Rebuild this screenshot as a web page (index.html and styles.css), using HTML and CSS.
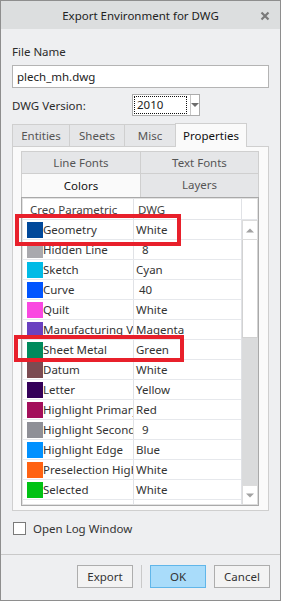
FILE: index.html
```html
<!DOCTYPE html>
<html lang="en">
<head>
  <meta charset="UTF-8" />
  <title>Export Environment for DWG</title>
  <link rel="stylesheet" href="styles.css">
</head>
<body>

  <div class="window">
    <div class="titlebar">
      <span class="title">Export Environment for DWG</span>
      <svg class="close" width="10" height="10" viewBox="0 0 10 10">
        <path d="M1.5 1.5 L8.5 8.5 M8.5 1.5 L1.5 8.5" stroke="#7a7a7a" stroke-width="2.2" />
      </svg>
    </div>

    <div class="content">
      <div class="label">File Name</div>
      <div class="textbox">plech_mh.dwg</div>

      <div class="version-row">
        <span class="version-label">DWG Version:</span>
        <div class="select">
          <div class="select-value"><span class="focus">2010</span></div>
          <div class="select-arrow">
            <svg width="8" height="5" viewBox="0 0 8 5"><path d="M0 0 H8 L4 4 Z" fill="#6d6d6d" /></svg>
          </div>
        </div>
      </div>

      <div class="tabs">
        <div class="tab tab-entities">Entities</div>
        <div class="tab tab-sheets">Sheets</div>
        <div class="tab tab-misc">Misc</div>
        <div class="tab tab-props active">Properties</div>
      </div>

      <div class="panel">
        <div class="subtabs">
          <div class="subtab">Line Fonts</div>
          <div class="subtab">Text Fonts</div>
          <div class="subtab active">Colors</div>
          <div class="subtab">Layers</div>
        </div>

        <div class="grid">
          <div class="grid-head">
            <div class="head-cell col-name">Creo Parametric</div>
            <div class="head-cell col-dwg">DWG</div>
            <div class="head-cell col-scroll"></div>
          </div>
          <div class="grid-body">
            <div class="rows" id="rows"></div>
            <div class="scrollbar">
              <div class="scroll-btn">
                <svg width="8" height="5" viewBox="0 0 8 5"><path d="M0 4.5 H8 L4 0.5 Z" fill="#a2a2a2" /></svg>
              </div>
              <div class="scroll-thumb"></div>
              <div class="scroll-track"></div>
              <div class="scroll-btn">
                <svg width="8" height="5" viewBox="0 0 8 5"><path d="M0 0.5 H8 L4 4.5 Z" fill="#a2a2a2" /></svg>
              </div>
            </div>
          </div>
        </div>
      </div>

      <div class="check">
        <span class="box"></span>
        <span>Open Log Window</span>
      </div>
    </div>

    <div class="footer">
      <button class="btn">Export</button>
      <span class="divider"></span>
      <button class="btn btn-ok">OK</button>
      <button class="btn">Cancel</button>
    </div>

    <div class="mark mark-geometry"></div>
    <div class="mark mark-sheet"></div>
  </div>

  <script>
    // colour table rows: name, swatch, dwg colour
    const colors = [
      ["Geometry", "#00489a", "White"],
      ["Hidden Line", "#a9a9ae", "  8"],
      ["Sketch", "#00bbe6", "Cyan"],
      ["Curve", "#0055ff", " 40"],
      ["Quilt", "#fa48e1", "White"],
      ["Manufacturing Volume", "#6a41c0", "Magenta"],
      ["Sheet Metal", "#008a5c", "Green"],
      ["Datum", "#7b4b52", "White"],
      ["Letter", "#340059", "Yellow"],
      ["Highlight Primary", "#a30f5b", "Red"],
      ["Highlight Secondary", "#8f9097", "  9"],
      ["Highlight Edge", "#0091ff", "Blue"],
      ["Preselection Highlight", "#ff6212", "White"],
      ["Selected", "#00c214", "White"],
      ["", "", ""]
    ];

    const rows = document.getElementById("rows");
    colors.forEach(function (c) {
      const row = document.createElement("div");
      row.className = "row";
      const swatch = c[1] ? '<span class="swatch" style="background:' + c[1] + '"></span>' : '';
      row.innerHTML =
        '<div class="cell col-name">' + swatch + '<span class="name">' + c[0] + '</span></div>' +
        '<div class="cell col-dwg">' + c[2] + '</div>';
      rows.appendChild(row);
    });
  </script>

</body>
</html>
```

FILE: styles.css
```css
body {
  margin: 0;
  font-family: "Noto Sans", "Open Sans", sans-serif;
  font-size: 11.5px;
  color: #2b2b2b;
  background: #eeeff1;
}

.window {
  position: relative;
  width: 281px;
  height: 601px;
  box-sizing: border-box;
  border: 1px solid #8e8e8e;
  background: #eeeff1;
  display: flex;
  flex-direction: column;
}

.titlebar {
  height: 28px;
  flex: none;
  background: #dcdedf;
  display: flex;
  align-items: center;
  justify-content: center;
  position: relative;
}

.title {
  color: #222;
}

.close {
  position: absolute;
  right: 10px;
  top: 10px;
}

.content {
  padding: 0 11px;
  display: flex;
  flex-direction: column;
}

.label {
  margin-top: 15px;
  line-height: 16px;
}

.textbox {
  margin-top: 5px;
  height: 23px;
  box-sizing: border-box;
  border: 1px solid #b4b4b4;
  background: #fff;
  padding-left: 4px;
  line-height: 21px;
  color: #222;
}

.version-row {
  margin-top: 6px;
  height: 22px;
  display: flex;
  align-items: center;
}

.version-label {
  width: 120px;
}

.select {
  width: 68px;
  height: 22px;
  box-sizing: border-box;
  border: 1px solid #acacac;
  background: #fff;
  display: flex;
}

.select-value {
  width: 53px;
  border-right: 1px solid #c6c6c6;
  padding: 1px 3px 1px 1px;
}

.focus {
  display: block;
  height: 18px;
  box-sizing: border-box;
  border: 1px dotted #111;
  padding-left: 2px;
  line-height: 16px;
  color: #222;
}

.select-arrow {
  flex: 1;
  display: flex;
  align-items: center;
  justify-content: center;
}

.tabs {
  margin-top: 7px;
  height: 23px;
  display: flex;
  align-items: flex-end;
  position: relative;
  z-index: 1;
}

.tab {
  height: 22px;
  box-sizing: border-box;
  border: 1px solid #cfcfcf;
  border-bottom: none;
  border-right: none;
  background: #e5e6e8;
  color: #555;
  text-align: center;
  line-height: 22px;
}

.tab-entities { width: 57px; }
.tab-sheets { width: 55px; }
.tab-misc { width: 51px; }

.tab-props {
  width: 72px;
  border-right: 1px solid #cfcfcf;
}

.tab.active {
  height: 24px;
  margin-bottom: -1px;
  background: #fafafa;
  color: #111;
  line-height: 23px;
}

.panel {
  height: 365px;
  box-sizing: border-box;
  border: 1px solid #cfcfcf;
  background: #fafafa;
  padding: 4px 9px 4px 8px;
  display: flex;
  flex-direction: column;
}

.subtabs {
  display: grid;
  grid-template-columns: 119px 119px;
  grid-template-rows: 22px 24px;
}

.subtab {
  box-sizing: border-box;
  border: 1px solid #cfcfcf;
  border-bottom: none;
  background: #e5e6e8;
  color: #555;
  text-align: center;
  line-height: 21px;
}

.subtab:nth-child(odd) {
  border-right: none;
}

.subtab.active {
  background: #fafafa;
  color: #111;
  line-height: 23px;
}

.grid {
  flex: 1;
  border: 1px solid #a9a9a9;
  box-shadow: inset 0 0 0 1px #e2e2e2;
  background: #fff;
  display: flex;
  flex-direction: column;
  overflow: hidden;
}

.grid-head {
  height: 22px;
  flex: none;
  display: flex;
  border-bottom: 1px solid #e3e5e9;
  box-sizing: border-box;
  color: #444;
}

.head-cell {
  line-height: 24px;
  overflow: hidden;
}

.col-name {
  width: 111px;
  flex: none;
}

.head-cell.col-name {
  padding-left: 8px;
  box-sizing: border-box;
}

.col-dwg {
  width: 108px;
  flex: none;
  box-sizing: border-box;
  border-left: 1px solid #e0e2e6;
}

.head-cell.col-dwg {
  padding-left: 4px;
}

.col-scroll {
  flex: 1;
  border-left: 1px solid #e0e2e6;
}

.grid-body {
  flex: 1;
  display: flex;
  min-height: 0;
}

.rows {
  flex: 1;
  overflow: hidden;
}

.row {
  height: 20px;
  box-sizing: border-box;
  border-bottom: 1px solid #e6e8ec;
  display: flex;
}

.cell {
  line-height: 19px;
  white-space: pre;
  overflow: hidden;
  color: #333;
}

.cell.col-name {
  display: flex;
  align-items: center;
}

.cell.col-dwg {
  padding-left: 2px;
}

.swatch {
  width: 16px;
  height: 16px;
  flex: none;
  margin-left: 5px;
}

.name {
  flex: 1;
  min-width: 0;
  overflow: hidden;
  white-space: nowrap;
}

.scrollbar {
  width: 17px;
  flex: none;
  display: flex;
  flex-direction: column;
  border-left: 1px solid #e0e2e6;
  box-sizing: border-box;
  background: #dadbdc;
}

.scroll-btn {
  height: 20px;
  flex: none;
  box-sizing: border-box;
  background: #fff;
  border: 1px solid #dcdcdc;
  display: flex;
  align-items: center;
  justify-content: center;
}

.scroll-thumb {
  height: 98px;
  flex: none;
  box-sizing: border-box;
  background: #fff;
  border: 1px solid #d2d2d2;
  border-top: none;
}

.scroll-track {
  flex: 1;
}

.check {
  margin-top: 11px;
  height: 13px;
  display: flex;
  align-items: center;
  gap: 7px;
  padding-left: 1px;
  color: #333;
}

.box {
  width: 13px;
  height: 13px;
  box-sizing: border-box;
  border: 1px solid #7a7a7a;
  background: #fff;
}

.footer {
  margin-top: 19px;
  border-top: 1px solid #c9c9c9;
  padding: 10px 10px 0 0;
  display: flex;
  justify-content: flex-end;
  align-items: center;
}

.btn {
  width: 56px;
  height: 23px;
  box-sizing: border-box;
  border: 1px solid #adadad;
  background: #f3f3f3;
  font-family: inherit;
  font-size: 11.5px;
  color: #333;
  padding: 0;
  margin-left: 8px;
}

.btn:first-child {
  margin-left: 0;
}

.btn-ok {
  background: #a9dcfa;
  border-color: #61b6e9;
}

.divider {
  width: 1px;
  height: 23px;
  background: #c9c9c9;
  margin-left: 8px;
}

.mark {
  position: absolute;
  border: 4px solid #e8202b;
  box-sizing: border-box;
}

.mark-geometry {
  left: 14px;
  top: 213px;
  width: 166px;
  height: 32px;
}

.mark-sheet {
  left: 13px;
  top: 334px;
  width: 170px;
  height: 27px;
}
```
